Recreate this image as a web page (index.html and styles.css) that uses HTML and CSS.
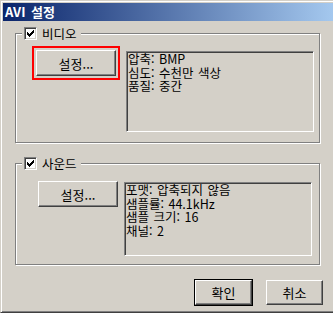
FILE: index.html
```html
<!DOCTYPE html>
<html lang="ko">
<head>
    <meta charset="UTF-8">
    <title>AVI 설정</title>
    <link rel="stylesheet" href="styles.css">
</head>
<body>
    <div class="window">
        <div class="titlebar">AVI 설정</div>
        <div class="client">
            <div class="group group-video">
                <div class="legend">
                    <span class="check"><svg width="7" height="7" viewBox="0 0 7 7" shape-rendering="crispEdges"><path d="M0 2h1v3h-1zM1 3h1v3h-1zM2 4h1v3h-1zM3 3h1v3h-1zM4 2h1v3h-1zM5 1h1v3h-1zM6 0h1v3h-1z" fill="#000"/></svg></span>
                    <span>비디오</span>
                </div>
                <div class="group-row">
                    <div class="focus-mark">
                        <button class="btn">설정...</button>
                    </div>
                    <div class="info info-video">압축: BMP<br>심도: 수천만 색상<br>품질: 중간</div>
                </div>
            </div>

            <div class="group group-audio">
                <div class="legend">
                    <span class="check"><svg width="7" height="7" viewBox="0 0 7 7" shape-rendering="crispEdges"><path d="M0 2h1v3h-1zM1 3h1v3h-1zM2 4h1v3h-1zM3 3h1v3h-1zM4 2h1v3h-1zM5 1h1v3h-1zM6 0h1v3h-1z" fill="#000"/></svg></span>
                    <span>사운드</span>
                </div>
                <div class="group-row">
                    <button class="btn btn-plain">설정...</button>
                    <div class="info info-audio">포맷: 압축되지 않음<br>샘플률: 44.1kHz<br>샘플 크기: 16<br>채널: 2</div>
                </div>
            </div>

            <div class="actions">
                <button class="btn btn-small btn-default">확인</button>
                <button class="btn btn-small">취소</button>
            </div>
        </div>
    </div>
</body>
</html>
```

FILE: styles.css
```css
html, body {
    margin: 0;
    overflow: hidden;
    background: #d4d0c8;
}
body {
    font-family: "Noto Sans CJK KR", sans-serif;
    font-size: 12px;
    color: #000;
}
.window {
    width: 340px;
    height: 313px;
    box-sizing: border-box;
    padding: 2px;
    border: 1px solid;
    border-color: #d4d0c8 #404040 #404040 #d4d0c8;
    box-shadow: inset 1px 1px 0 #fff, inset -1px -1px 0 #808080;
}
.titlebar {
    height: 18px;
    line-height: 18px;
    padding-left: 2px;
    background: linear-gradient(to right, #0a246a, #a6caf0);
    color: #fff;
    font-size: 13px;
    font-weight: bold;
    word-spacing: 2px;
}
.client {
    padding: 12px 0 0 12px;
}
.group {
    position: relative;
    width: 305px;
    box-sizing: border-box;
    border: 1px solid #808080;
    box-shadow: inset 1px 1px 0 #fff, 1px 1px 0 #fff;
}
.group-video {
    height: 110px;
}
.group-audio {
    height: 102px;
    margin-top: 20px;
}
/* checkbox caption sits over the top edge of the frame */
.legend {
    position: absolute;
    top: -7px;
    left: 6px;
    display: flex;
    align-items: center;
    height: 13px;
    padding: 0 4px 0 2px;
    background: #d4d0c8;
    line-height: 13px;
    font-size: 12.5px;
}
.check {
    display: flex;
    align-items: center;
    justify-content: center;
    width: 13px;
    height: 13px;
    box-sizing: border-box;
    margin-right: 5px;
    background: #fff;
    border: 1px solid;
    border-color: #808080 #fff #fff #808080;
    box-shadow: inset 1px 1px 0 #404040, inset -1px -1px 0 #d4d0c8;
}
.group-row {
    display: flex;
    align-items: flex-start;
}
.focus-mark {
    margin: 12px 0 0 16px;
    padding: 2px;
    border: 2px solid #f00;
}
.btn {
    display: block;
    width: 80px;
    height: 26px;
    padding: 0;
    font: inherit;
    font-size: 13px;
    background: #d4d0c8;
    border: 1px solid;
    border-color: #fff #404040 #404040 #fff;
    box-shadow: inset -1px -1px 0 #808080;
}
.btn-plain {
    margin: 17px 0 0 22px;
}
.info {
    width: 188px;
    box-sizing: border-box;
    margin-left: 6px;
    padding: 0 1px;
    font-size: 12.5px;
    line-height: 13.5px;
    word-spacing: 1px;
    border: 1px solid;
    border-color: #808080 #fff #fff #808080;
    box-shadow: inset 1px 1px 0 #404040, inset -1px -1px 0 #d4d0c8;
}
.info-video {
    height: 81px;
    margin-top: 17px;
}
.info-audio {
    height: 74px;
    margin-top: 18px;
}
.actions {
    display: flex;
    gap: 14px;
    margin: 15px 0 0 180px;
}
.btn-small {
    width: 57px;
    height: 25px;
}
.btn-default {
    outline: 1px solid #000;
}
```
